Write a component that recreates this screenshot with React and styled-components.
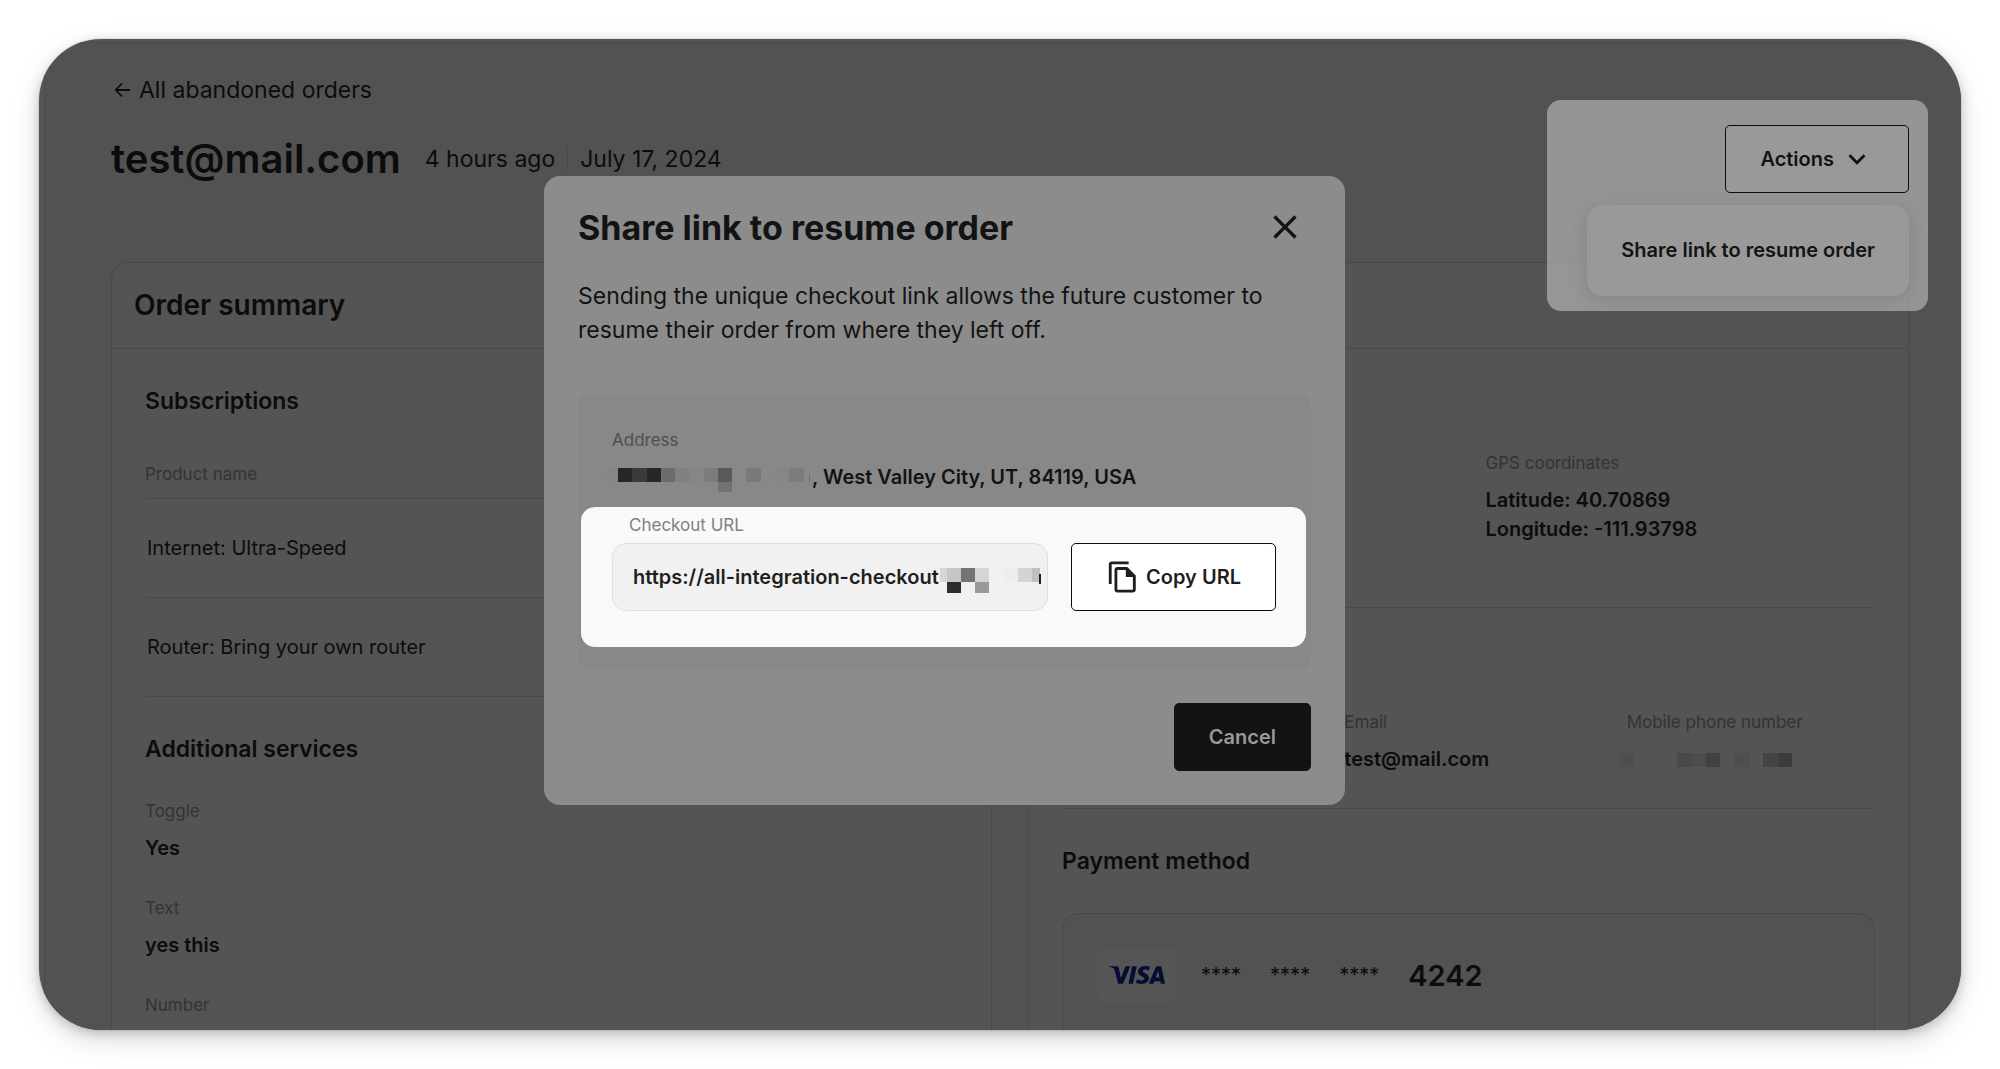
import React from 'react';
import styled, { createGlobalStyle } from 'styled-components'
import { MdClose, MdExpandMore, MdOutlineFileCopy } from 'react-icons/md'
import { SiVisa } from 'react-icons/si'

const GlobalStyle = createGlobalStyle`
  * {
    box-sizing: border-box;
  }

  body {
    margin: 0;
    background: #FFFFFF;
    color: #0C0C0C;
    font-family: Inter, "Liberation Sans", sans-serif;
    font-size: 20px;
    line-height: 29px;
  }

  button, input {
    font: inherit;
    color: inherit;
  }

  h1, h2, h3, p, dl, dd {
    margin: 0;
  }
`

const Frame = styled.div`
  position: relative;
  height: calc(100vh - 78px);
  margin: 39px;
  padding: 3px 0 0 5px;
  overflow: hidden;
  border-radius: 62px;
  background: #555555;
  box-shadow: 0 0 0 1px rgba(0, 0, 0, 0.06), 0 4px 12px rgba(0, 0, 0, 0.2), 0 10px 30px rgba(0, 0, 0, 0.12);
`

const Page = styled.main`
  min-height: 100%;
  padding: 33px 52px 0 66px;
  border-top: 1px solid #4B4B4B;
  border-left: 1px solid #4B4B4B;
  background: #525252;
`

const BackLink = styled.a`
  display: flex;
  align-items: center;
  gap: 6px;
  width: fit-content;
  height: 28px;
  font-size: 23px;
  color: inherit;
  text-decoration: none;
`

const Header = styled.header`
  display: flex;
  align-items: center;
  margin-top: 21px;
`

const Title = styled.h1`
  margin-right: 24px;
  font-size: 40px;
  font-weight: 600;
  line-height: 48px;
`

const HeaderDate = styled.span`
  font-size: 23px;

  & + & {
    margin-left: 12px;
    padding-left: 12px;
    border-left: 1px solid #484848;
    line-height: 23px;
  }
`

const ActionsMenu = styled.div`
  position: relative;
  z-index: 1;
  margin-left: auto;
`

const Spotlight = styled.div`
  position: absolute;
  top: -25px;
  right: -19px;
  width: 381px;
  height: 211px;
  border-radius: 14px;
  background: rgba(255, 255, 255, 0.39);
`

const Button = styled.button`
  position: relative;
  display: flex;
  flex-shrink: 0;
  align-items: center;
  gap: 6px;
  height: 68px;
  padding: 0 34px;
  border: 1px solid ${props => props.$dark ? '#131313' : '#0C0C0C'};
  border-radius: 5px;
  background: ${props => props.$dark ? '#131313' : props.$lit ? '#FFFFFF' : '#999999'};
  color: ${props => props.$dark ? '#999999' : props.$lit ? '#1F1F1F' : '#131313'};
  font-weight: 600;
`

const MenuItem = styled.button`
  position: absolute;
  top: 80px;
  right: 0;
  height: 91px;
  padding: 0 34px;
  border: 0;
  border-radius: 16px;
  background: #999999;
  box-shadow: 0 4px 20px rgba(0, 0, 0, 0.12);
  color: #131313;
  font-weight: 600;
  white-space: nowrap;
`

const Columns = styled.div`
  display: grid;
  grid-template-columns: 1fr 1fr;
  gap: 36px;
  margin-top: 69px;
`

const Card = styled.section`
  height: 1000px;
  border: 1px solid #494949;
  border-radius: 16px;
  background: #545454;
`

const CardHeader = styled.div`
  display: flex;
  align-items: center;
  height: 86px;
  padding: 0 22px;
  border-bottom: 1px solid #494949;
`

const CardTitle = styled.h2`
  font-size: 28px;
  font-weight: 600;
`

const CardBody = styled.div`
  padding: 0 33px;
`

const SectionTitle = styled.h3`
  padding-top: 36px;
  font-size: 23px;
  font-weight: 600;
  line-height: 32px;
`

const ProductTable = styled.table`
  width: 100%;
  margin-top: 34px;
  border-collapse: separate;
  border-spacing: 0;
  text-align: left;

  th, td {
    border-bottom: 1px solid #494949;
  }

  th {
    height: 48px;
    padding: 0;
    color: #333333;
    font-size: 17px;
    font-weight: 400;
  }

  td {
    height: 99px;
    padding: 0 2px;
  }
`

const FieldList = styled.dl`
  display: grid;
  gap: 33px;
  margin-top: 34px;
`

const FieldGrid = styled.dl`
  display: grid;
  grid-template-columns: repeat(${props => props.$columns}, 1fr);
  gap: 34px;
  min-height: ${props => props.$tall ? '259px' : '0'};
  padding: 102px 0 34px;
  border-bottom: 1px solid #494949;
`

const FieldBox = styled.div`
  grid-column: ${props => props.$column || 'auto'};
`

const Label = styled.dt`
  margin-bottom: 11px;
  color: ${props => props.$light ? '#4F4F4F' : '#333333'};
  font-size: 17px;
  line-height: 24px;
`

const Value = styled.dd`
  display: flex;
  align-items: center;
  min-height: 29px;
  font-weight: 600;
  white-space: pre-line;
`

const PaymentCard = styled.div`
  display: flex;
  align-items: center;
  gap: 29px;
  height: 300px;
  margin-top: 36px;
  padding: 34px 34px 210px;
  border: 1px solid #494949;
  border-radius: 16px;
  background: #525252;
`

const CardBrand = styled.div`
  display: flex;
  align-items: center;
  justify-content: center;
  width: 80px;
  height: 54px;
  margin-right: -5px;
  border-radius: 8px;
  background: #555555;
  color: #070C33;
`

const CardDigits = styled.strong`
  font-size: 29px;
  font-weight: 600;
`

const Overlay = styled.div`
  position: absolute;
  inset: 0;
  z-index: 2;
  display: flex;
  align-items: flex-start;
  justify-content: center;
  padding: 137px 111px 0 0;
`

const Modal = styled.div`
  width: 801px;
  padding: 29px 34px 34px;
  border-radius: 16px;
  background: #8C8C8C;
  color: #131313;
`

const ModalHeader = styled.div`
  display: flex;
  align-items: center;
  justify-content: space-between;
  height: 44px;
`

const ModalTitle = styled.h2`
  font-size: 34px;
  font-weight: 700;
`

const CloseButton = styled.button`
  display: flex;
  margin-right: 6px;
  padding: 0;
  border: 0;
  background: none;
`

const ModalText = styled.p`
  margin: 30px 0 47px;
  font-size: 23px;
  line-height: 34px;
`

const LinkBox = styled.div`
  padding: 34px 5px 22px 3px;
  border-radius: 10px;
  background: #888888;
`

const Address = styled.dl`
  padding-left: 31px;
`

const CheckoutPanel = styled.div`
  margin-top: 15px;
  padding: 6px 30px 36px 31px;
  border-radius: 14px;
  background: #F9F9F9;
`

const UrlLabel = styled.label`
  display: block;
  padding: 0 17px 6px;
  color: #808080;
  font-size: 17px;
  line-height: 24px;
`

const UrlRow = styled.div`
  display: flex;
  gap: 23px;
`

const UrlField = styled.div`
  position: relative;
  flex: 1;
`

const UrlInput = styled.input`
  width: 100%;
  height: 68px;
  padding: 0 20px;
  border: 1px solid #DFDFDF;
  border-radius: 14px;
  background: #F1F1F1;
  color: #1F1F1F;
  font-weight: 600;
`

const UrlMask = styled.div`
  position: absolute;
  top: 20px;
  left: 328px;
  display: flex;
`

const ModalFooter = styled.div`
  display: flex;
  justify-content: flex-end;
  margin-top: 34px;
`

const MosaicSvg = styled.svg`
  flex-shrink: 0;
  overflow: visible;
`

// [x, y, width, height, color]
const addressCells = [
  [-5, 5, 11, 14, '#868686'],
  [6, 5, 14, 14, '#262626'],
  [20, 5, 15, 14, '#3A3A3A'],
  [35, 5, 14, 14, '#262626'],
  [49, 5, 14, 14, '#6C6C6C'],
  [63, 5, 14, 14, '#808080'],
  [77, 5, 15, 14, '#868686'],
  [92, 5, 14, 14, '#7C7C7C'],
  [106, 5, 14, 14, '#5A5A5A'],
  [106, 19, 14, 10, '#727272'],
  [134, 5, 15, 14, '#7A7A7A'],
  [163, 5, 14, 14, '#868686'],
  [177, 5, 15, 14, '#7C7C7C'],
  [197, 12, 1, 6, '#6A6A6A'],
]

const urlCells = [
  [0, 5, 7, 14, '#D6D6D6'],
  [7, 5, 14, 14, '#C6C6C6'],
  [21, 5, 14, 14, '#747474'],
  [35, 5, 14, 14, '#D5D5D5'],
  [64, 5, 14, 14, '#EDEDED'],
  [78, 5, 14, 14, '#D4D4D4'],
  [92, 5, 8, 14, '#C0C0C0'],
  [7, 19, 14, 11, '#2E2E2E'],
  [35, 19, 14, 11, '#999999'],
  [99, 11, 2, 10, '#1F1F1F'],
]

const phoneCells = [
  [-7, 8, 14, 14, '#4F4F4F'],
  [21, 8, 14, 14, '#525252'],
  [50, 8, 14, 14, '#494949'],
  [64, 8, 15, 14, '#4D4D4D'],
  [79, 8, 14, 14, '#424242'],
  [108, 8, 14, 14, '#4E4E4E'],
  [136, 8, 15, 14, '#444444'],
  [151, 8, 14, 14, '#3B3B3B'],
]

const Mosaic = ({ cells, width }) => (
  <MosaicSvg width={width} height="29" shapeRendering="crispEdges" aria-hidden="true">
    {cells.map(([x, y, w, h, color]) => (
      <rect key={`${x}-${y}`} x={x} y={y} width={w} height={h} fill={color} />
    ))}
  </MosaicSvg>
)

const ArrowLeft = () => (
  <svg width="22" height="22" viewBox="0 0 22 22" fill="none" stroke="currentColor" strokeWidth="1.8" aria-hidden="true">
    <path d="M19 11H5M11 4.5L4.8 11L11 17.5" />
  </svg>
)

const Field = ({ label, column, children }) => (
  <FieldBox $column={column}>
    <Label>{label}</Label>
    <Value>{children}</Value>
  </FieldBox>
)

const App = () => {
  return (
    <>
      <GlobalStyle />
      <Frame>
        <Page>
          <BackLink href="#orders"><ArrowLeft />All abandoned orders</BackLink>
          <Header>
            <Title>test@mail.com</Title>
            <HeaderDate>4 hours ago</HeaderDate>
            <HeaderDate>July 17, 2024</HeaderDate>
            <ActionsMenu>
              <Spotlight />
              <Button type="button">Actions<MdExpandMore size={34} /></Button>
              <MenuItem type="button">Share link to resume order</MenuItem>
            </ActionsMenu>
          </Header>

          <Columns>
            <Card>
              <CardHeader><CardTitle>Order summary</CardTitle></CardHeader>
              <CardBody>
                <SectionTitle>Subscriptions</SectionTitle>
                <ProductTable>
                  <thead>
                    <tr><th>Product name</th></tr>
                  </thead>
                  <tbody>
                    <tr><td>Internet: Ultra-Speed</td></tr>
                    <tr><td>Router: Bring your own router</td></tr>
                  </tbody>
                </ProductTable>
                <SectionTitle>Additional services</SectionTitle>
                <FieldList>
                  <Field label="Toggle">Yes</Field>
                  <Field label="Text">yes this</Field>
                  <Field label="Number" />
                </FieldList>
              </CardBody>
            </Card>

            <Card>
              <CardHeader />
              <CardBody>
                <FieldGrid $columns={2} $tall>
                  <Field label="GPS coordinates" column={2}>{'Latitude: 40.70869\nLongitude: -111.93798'}</Field>
                </FieldGrid>
                <FieldGrid $columns={3}>
                  <Field label="Email" column={2}>test@mail.com</Field>
                  <Field label="Mobile phone number"><Mosaic cells={phoneCells} width="165" /></Field>
                </FieldGrid>
                <SectionTitle>Payment method</SectionTitle>
                <PaymentCard>
                  <CardBrand><SiVisa size={56} title="Visa" /></CardBrand>
                  <span>****</span>
                  <span>****</span>
                  <span>****</span>
                  <CardDigits>4242</CardDigits>
                </PaymentCard>
              </CardBody>
            </Card>
          </Columns>
        </Page>

        <Overlay>
          <Modal role="dialog" aria-labelledby="share-title">
            <ModalHeader>
              <ModalTitle id="share-title">Share link to resume order</ModalTitle>
              <CloseButton type="button" aria-label="Close"><MdClose size={40} /></CloseButton>
            </ModalHeader>
            <ModalText>
              Sending the unique checkout link allows the future customer to resume their order from where they left off.
            </ModalText>
            <LinkBox>
              <Address>
                <Label $light>Address</Label>
                <Value><Mosaic cells={addressCells} width="200" />, West Valley City, UT, 84119, USA</Value>
              </Address>
              <CheckoutPanel>
                <UrlLabel htmlFor="checkout-url">Checkout URL</UrlLabel>
                <UrlRow>
                  <UrlField>
                    <UrlInput id="checkout-url" readOnly value="https://all-integration-checkout" />
                    <UrlMask><Mosaic cells={urlCells} width="101" /></UrlMask>
                  </UrlField>
                  <Button type="button" $lit><MdOutlineFileCopy size={34} />Copy URL</Button>
                </UrlRow>
              </CheckoutPanel>
            </LinkBox>
            <ModalFooter>
              <Button type="button" $dark>Cancel</Button>
            </ModalFooter>
          </Modal>
        </Overlay>
      </Frame>
    </>
  );
}

export default App;
